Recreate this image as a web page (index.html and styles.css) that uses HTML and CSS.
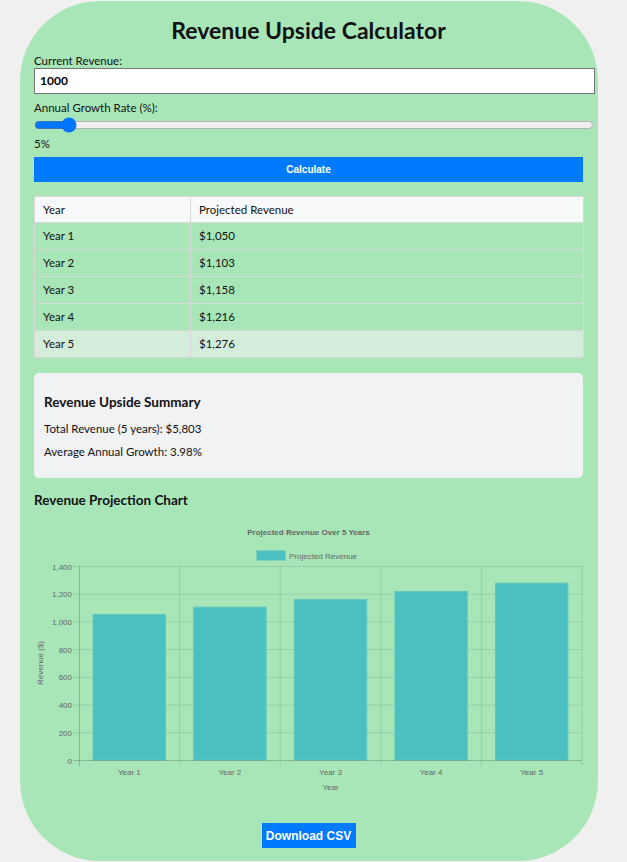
FILE: index.html
```html
<!doctype html>
<html>
	<head>
		<meta charset="UTF-8">
		<title>Revenue Upside Calculator</title>
		<link rel="stylesheet" href="styles.css">
	</head>
<body>
	<div class="calc">
		<h1 class="title">Revenue Upside Calculator</h1>

		<label class="field-label" for="revenue">Current Revenue:</label>
		<input class="field-input" type="text" id="revenue" value="1000">

		<label class="field-label" for="growth">Annual Growth Rate (%):</label>
		<input class="field-range" type="range" id="growth" min="0" max="100" value="5">
		<p class="rate-value"><span>5</span>%</p>

		<button class="btn-calc">Calculate</button>

		<table class="result">
			<thead>
				<tr><th class="col-year">Year</th><th>Projected Revenue</th></tr>
			</thead>
			<tbody>
				<tr><td>Year 1</td><td>$1,050</td></tr>
				<tr><td>Year 2</td><td>$1,103</td></tr>
				<tr><td>Year 3</td><td>$1,158</td></tr>
				<tr><td>Year 4</td><td>$1,216</td></tr>
				<tr class="hover"><td>Year 5</td><td>$1,276</td></tr>
			</tbody>
		</table>

		<div class="summary">
			<h3>Revenue Upside Summary</h3>
			<p>Total Revenue (5 years): $5,803</p>
			<p>Average Annual Growth: 3.98%</p>
		</div>

		<h3 class="chart-title">Revenue Projection Chart</h3>
		<svg class="chart" width="549" height="290" viewBox="0 0 549 290">
			<!-- chart title + legend -->
			<text class="c-title" x="274.5" y="21" text-anchor="middle">Projected Revenue Over 5 Years</text>
			<rect x="223" y="37" width="28" height="9" fill="#4bc0c0" stroke="#4bc0c0"/>
			<text class="c-text" x="255" y="44.5">Projected Revenue</text>

			<!-- horizontal grid -->
			<g stroke="rgba(0,0,0,0.1)" stroke-width="1">
				<line x1="39" y1="52.5" x2="548" y2="52.5"/>
				<line x1="39" y1="80.2" x2="548" y2="80.2"/>
				<line x1="39" y1="107.9" x2="548" y2="107.9"/>
				<line x1="39" y1="135.6" x2="548" y2="135.6"/>
				<line x1="39" y1="163.4" x2="548" y2="163.4"/>
				<line x1="39" y1="191.1" x2="548" y2="191.1"/>
				<line x1="39" y1="218.8" x2="548" y2="218.8"/>
				<!-- vertical grid -->
				<line x1="145.6" y1="52" x2="145.6" y2="252"/>
				<line x1="246.2" y1="52" x2="246.2" y2="252"/>
				<line x1="346.8" y1="52" x2="346.8" y2="252"/>
				<line x1="447.4" y1="52" x2="447.4" y2="252"/>
				<line x1="548" y1="52" x2="548" y2="252"/>
			</g>

			<!-- bars -->
			<g fill="#4bc0c0" stroke="#5cc8c0" stroke-width="1">
				<rect x="59.1" y="100.5" width="72.4" height="145.5"/>
				<rect x="159.7" y="93.2" width="72.4" height="152.8"/>
				<rect x="260.3" y="85.5" width="72.4" height="160.5"/>
				<rect x="360.9" y="77.5" width="72.4" height="168.5"/>
				<rect x="461.5" y="69.2" width="72.4" height="176.8"/>
			</g>

			<!-- axes -->
			<g stroke="rgba(0,0,0,0.18)" stroke-width="1">
				<line x1="39" y1="246.5" x2="548" y2="246.5"/>
				<line x1="45.5" y1="52" x2="45.5" y2="252"/>
			</g>

			<!-- y ticks -->
			<g class="c-text" text-anchor="end">
				<text x="38" y="55.5">1,400</text>
				<text x="38" y="83.2">1,200</text>
				<text x="38" y="110.9">1,000</text>
				<text x="38" y="138.6">800</text>
				<text x="38" y="166.4">600</text>
				<text x="38" y="194.1">400</text>
				<text x="38" y="221.8">200</text>
				<text x="38" y="249.5">0</text>
			</g>
			<text class="c-text" x="0" y="0" text-anchor="middle" transform="translate(9 149) rotate(-90)">Revenue ($)</text>

			<!-- x ticks -->
			<g class="c-text" text-anchor="middle">
				<text x="95.3" y="261">Year 1</text>
				<text x="195.9" y="261">Year 2</text>
				<text x="296.5" y="261">Year 3</text>
				<text x="397.1" y="261">Year 4</text>
				<text x="497.7" y="261">Year 5</text>
				<text x="296.5" y="276">Year</text>
			</g>
		</svg>

		<div class="download">
			<button class="btn-csv">Download CSV</button>
		</div>
	</div>
</body>
</html>
```

FILE: styles.css
```css
*{
	box-sizing: content-box;
}
body{
	margin: 0;
	background-color: #f0f0f0;
	font-family: "Lato", "Noto Sans", sans-serif;
	font-size: 12px;
	color: #111;
}
.calc{
	width: 549px;
	margin: 1px 0 0 20px;
	padding: 0 15px 13px 14px;
	background-color: #a8e6b8;
	border-radius: 80px;
}
.calc .title{
	margin: 0;
	padding-top: 16px;
	margin-bottom: 11px;
	font-size: 23px;
	line-height: 26px;
	font-weight: bold;
	text-align: center;
}
.field-label{
	display: block;
	font-size: 11.5px;
	line-height: 14px;
}
.field-input{
	display: block;
	width: 100%;
	height: 14px;
	padding: 5px 5px;
	margin: 0 0 7px 0;
	border: 1px solid #767676;
	font-family: inherit;
	font-size: 12px;
	font-weight: bold;
	line-height: 14px;
	background-color: #fff;
}
.field-range{
	display: block;
	width: 100%;
	padding: 0 11px 0 0;
	margin: 2px 0;
	height: 16px;
}
.rate-value{
	margin: 4px 0 6px;
	font-size: 11.5px;
	line-height: 14px;
}
.btn-calc{
	display: block;
	width: 100%;
	height: 25px;
	padding: 0;
	border: none;
	background-color: #007bff;
	color: #fff;
	font-family: "Liberation Sans", Arial, sans-serif;
	font-size: 10px;
	font-weight: bold;
	cursor: pointer;
}
.result{
	width: 100%;
	margin-top: 14px;
	border-collapse: collapse;
}
.result th,
.result td{
	padding: 6px 8px;
	border: 1px solid #d8d8d8;
	text-align: left;
	font-size: 11.5px;
	line-height: 14px;
	font-weight: normal;
}
.result th{
	padding-bottom: 5px;
	background-color: #f8f9fa;
}
.result .col-year{
	width: 139px;
}
.result tr.hover td{
	background-color: #d4ecda;
}
.summary{
	margin-top: 15px;
	padding: 10px;
	background-color: #f1f2f4;
	border-radius: 5px;
}
.summary h3{
	margin: 10px 0 11px;
	font-size: 13.5px;
	line-height: 18px;
}
.summary p{
	margin: 9px 0;
	font-size: 11.5px;
	line-height: 14px;
}
.chart-title{
	margin: 13px 0 5px;
	font-size: 13.5px;
	line-height: 18px;
}
.chart{
	display: block;
}
.chart .c-title{
	font-family: "Liberation Sans", Arial, sans-serif;
	font-size: 8px;
	font-weight: bold;
	fill: #666;
}
.chart .c-text{
	font-family: "Liberation Sans", Arial, sans-serif;
	font-size: 8px;
	fill: #666;
}
.download{
	margin-top: 19px;
	text-align: center;
}
.btn-csv{
	width: 94px;
	height: 25px;
	padding: 0;
	border: none;
	background-color: #007bff;
	color: #fff;
	font-family: "Liberation Sans", Arial, sans-serif;
	font-size: 12px;
	font-weight: bold;
	cursor: pointer;
}
```
